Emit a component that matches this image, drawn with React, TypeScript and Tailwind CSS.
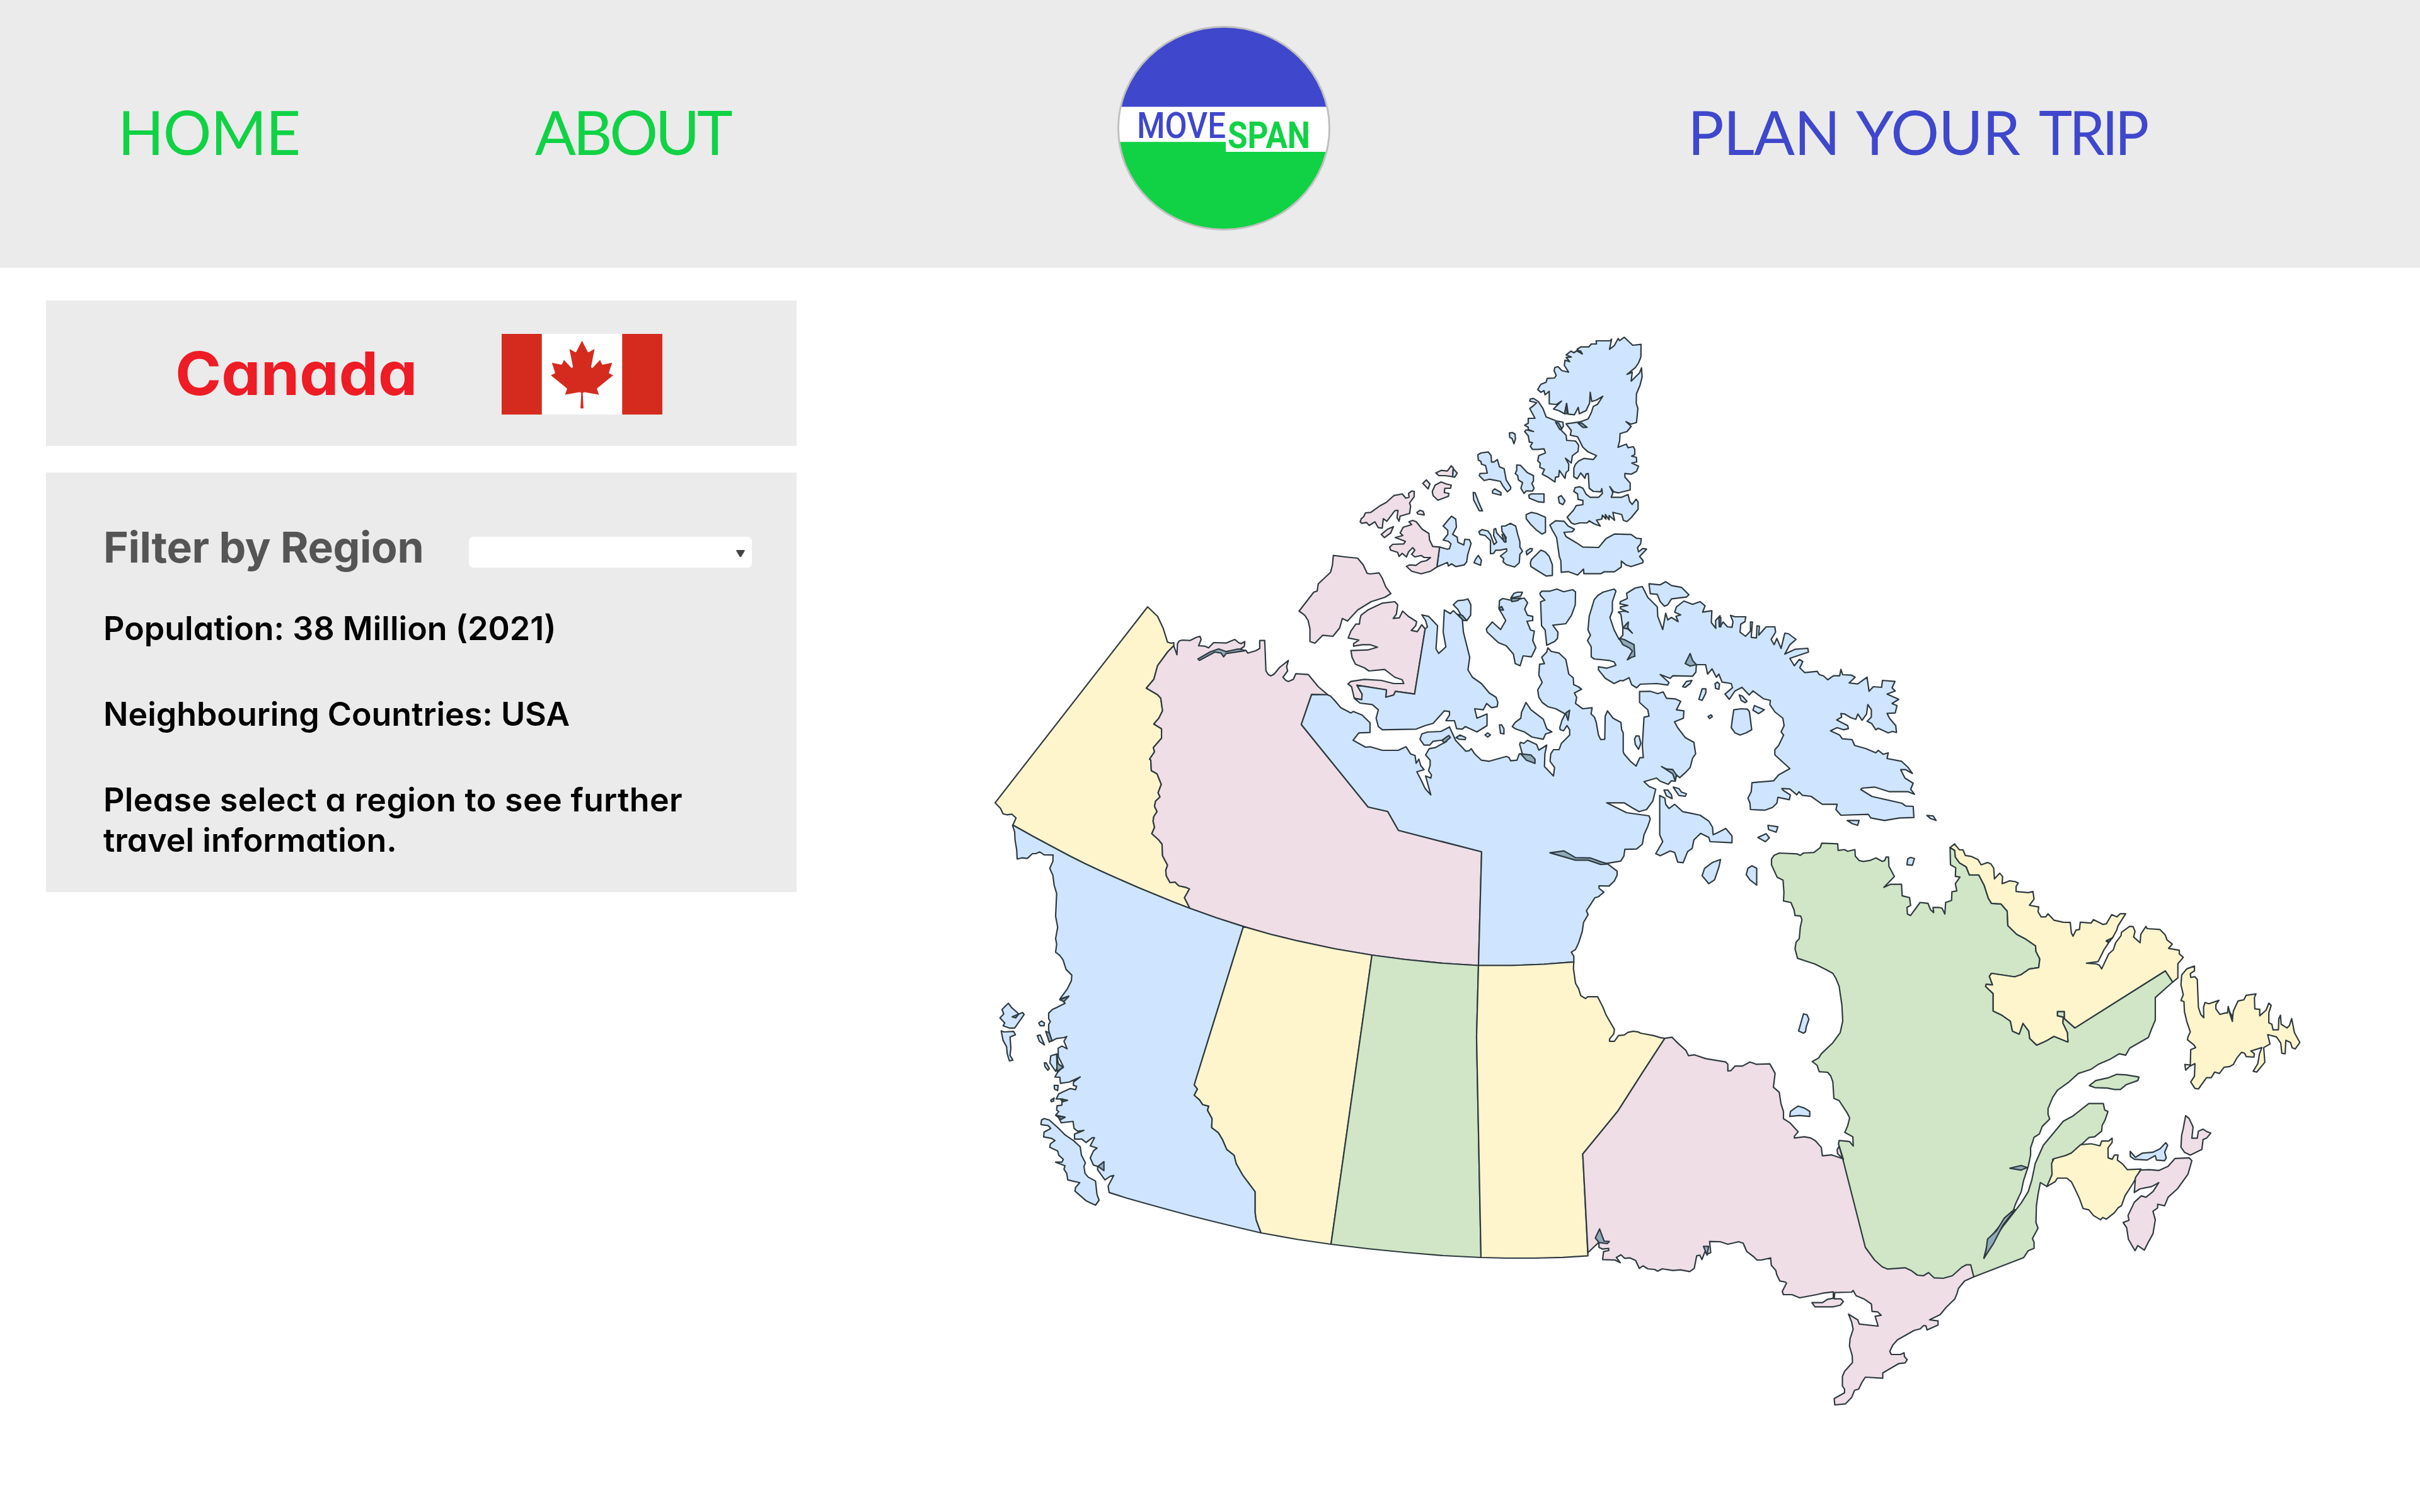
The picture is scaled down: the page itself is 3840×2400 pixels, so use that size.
import React from "react";

const BLUE = "#cfe5ff";
const PINK = "#efdee6";
const YELLOW = "#fff5cc";
const GREEN = "#d0e6c6";
const WATER = "#8fa9b8";

/* Map sheets: origin x, origin y, horizontal scale, vertical scale. */
const SHEETS: Record<string, [number, number, number, number]> = {
  A: [2140, 520, 3, 3],
  B: [2040, 860, 2.8, 3],
  C: [2500, 900, 2.529, 3],
  D: [1560, 940, 2.529, 3],
  E: [1560, 1280, 3, 2.24],
  F: [2440, 1300, 3, 2.8],
  G: [2480, 1740, 2.063, 3],
  H: [2780, 1320, 3, 2.1778],
  I: [3100, 1320, 2.7034, 2.24],
  Z: [0, 0, 1, 1],
};

/* Turns "A x y x y B x y" into a closed outline; a letter switches the sheet. */
function outline(points: string): string {
  let sheet = SHEETS.Z;
  const numbers: number[] = [];
  for (const token of points.trim().split(/[\s,]+/)) {
    if (SHEETS[token]) {
      sheet = SHEETS[token];
      continue;
    }
    const axis = numbers.length % 2;
    numbers.push(sheet[axis] + Number(token) / sheet[axis + 2]);
  }
  let d = "";
  for (let i = 0; i < numbers.length; i += 2) {
    d += `${i ? "L" : "M"}${numbers[i].toFixed(1)} ${numbers[i + 1].toFixed(1)}`;
  }
  return d + "Z";
}

/* Borders that two regions share. */
const YUKON_NWT =
  "Z 1888 1441.8 D 808 1455 828 1413 812 1405 785 1398 770 1380 750 1383 735 1350 733 1325 740 1300 720 1255 718 1200 705 1180 677 1150 688 1120 682 1090 685 1068 698 1045 688 1020 692 995 710 975 702 955 715 915 698 865 675 850 673 800 668 795 688 760 683 740 716 695 716 650 685 628 705 600 720 565 713 505 700 488 655 457 685 415 700 350 740 285 765 255";
const BC_ALBERTA =
  "Z 2001 1957 E 1300 1470 1295 1445 1295 1370 1235 1310 1205 1270 1195 1240 1160 1220 1140 1185 1120 1160 1088 1142 1090 1110 1068 1080 1074 1066 1045 1060 1030 1043 1005 1027 1020 1005 1005 990 Z 1973 1470.6";
const ONTARIO_QUEBEC =
  "F 1452 1510 G 918 310 990 720 1020 780 1045 812 1062 823 1120 817 1140 830 1160 852 1180 855 1197 840 1215 865 1245 867 1275 855 1305 815 1320 803 1335 803 1345 860";
const QUEBEC_LABRADOR =
  "H 943 55 965 65 968 88 988 108 1020 122 1035 150 1080 150 1105 185 1125 230 1140 248 1185 250 1215 275 1218 325 1260 355 1300 370 1350 395 1352 415 1370 440 1365 470 1320 475 1280 495 1250 502 1140 490 1130 500 1145 530 1115 528 1112 535 1148 560 1148 620 1190 635 1230 655 1240 690 1272 700 1290 663 1318 690 1322 715 1355 738 I 395 745 430 728 490 748 488 715 468 680 470 660 445 655 445 640 475 640 475 665 520 698 908 495 940 535";
/* The 60th parallel, cut at each corner where three regions meet. */
const NORTH_BC_WEST =
  "Z 1607 1309.5 1640 1328 1675 1346.8 1698 1359 1722 1370.9 1746 1382.2 1770 1393 1806 1408.7 1837 1421.6 1862 1431.8 1888 1441.8";
const NORTH_BC_WEST_BACK =
  "Z 1862 1431.8 1837 1421.6 1806 1408.7 1770 1393 1746 1382.2 1722 1370.9 1698 1359 1675 1346.8 1640 1328 1607 1309.5";

type Shape = [string, string];

const SHAPES: Shape[] = [
  // Yukon
  [YELLOW, "D 765 255 765 240 755 243 740 238 722 170 700 115 660 70 48 1003 70 1030 80 1055 95 1060 115 1057 132 1075 120 1108 " + NORTH_BC_WEST + " " + YUKON_NWT],
  // Northwest Territories, mainland
  [PINK, YUKON_NWT + " 778 298 780 245 787 232 800 228 830 230 855 215 870 210 875 225 865 255 890 257 905 265 925 240 975 242 1010 225 1025 240 1035 245 1050 235 1048 258 1030 273 975 283 1055 278 1062 290 1095 278 1110 268 1110 230 1130 230 1135 375 1145 393 1155 398 1168 390 1190 358 1225 325 1218 355 1222 375 1203 405 1215 420 1225 425 1245 415 1255 388 1305 392 1345 450 1385 490 1318 487 1277 630 1545 1023 Z 2202 1288 2219 1318 2351 1352 2346 1532.5 2290 1529 2230 1523 2177 1516 2118 1506 2060 1493.7 2016 1483 1973 1470.6 1930 1456.8"],
  // British Columbia
  [BLUE, BC_ALBERTA + " Z 1930 1456.8 1888 1441.8 " + NORTH_BC_WEST_BACK + " E 140 68 150 90 152 120 160 155 162 187 185 183 210 185 235 168 250 168 270 162 290 172 333 173 332 195 317 220 332 245 338 280 350 310 345 390 355 430 345 470 350 490 345 518 365 530 380 545 395 580 422 600 420 620 400 650 365 685 408 675 380 692 390 700 350 715 330 722 312 735 312 755 320 765 312 775 312 795 325 835 350 825 385 822 398 818 385 835 400 862 375 852 357 860 358 890 382 925 355 945 342 962 365 963 368 985 410 980 462 962 430 980 430 992 445 995 440 1007 415 1003 360 1022 348 1040 375 1040 400 1045 375 1050 375 1062 352 1065 350 1080 360 1085 345 1098 390 1105 360 1108 372 1125 428 1120 433 1145 450 1155 480 1152 435 1165 435 1183 470 1183 490 1195 520 1178 530 1178 510 1207 542 1215 525 1225 510 1250 525 1275 545 1280 545 1292 580 1328 605 1315 622 1312 595 1350 600 1373 Z 1787 1901.5 1817 1910 1855 1920.5 1893 1930.8 1930 1940 1965 1948.5"],
  // Alberta
  [YELLOW, BC_ALBERTA + " Z 2016 1483 2060 1493.7 2118 1506 2177 1516 2112 1975 2060 1967.5"],
  // Saskatchewan
  [GREEN, "Z 2177 1516 2230 1523 2290 1529 2346 1532.5 2343 1646 2350 1996 2290 1993 2230 1988 2170 1982 2112 1975"],
  // Nunavut, mainland
  [BLUE, "D 1318 487 B 185 728 200 735 215 752 245 790 290 815 300 808 340 825 375 862 375 908 325 910 300 945 355 978 375 976 430 993 500 993 535 976 555 1010 575 1018 580 1055 592 1035 600 1065 615 1085 583 1095 600 1130 620 1175 645 1205 622 1115 645 1125 648 1110 635 1090 642 1065 642 1040 622 1015 638 985 665 980 715 950 690 945 655 950 640 968 615 968 597 940 605 915 630 906 690 903 728 882 740 910 755 945 800 997 815 995 825 985 840 1010 870 1040 905 1045 945 1033 980 1022 992 1027 1000 1043 1028 1040 1038 1010 1052 1010 1040 965 1043 955 1058 960 1075 945 1115 965 1125 992 1160 968 1152 1010 1150 1070 1190 1115 1195 1075 1175 1045 1178 1010 1190 990 1215 990 1225 960 1262 920 1262 895 1250 875 1235 900 1220 895 1218 885 1228 850 1242 820 1200 795 1165 785 1140 765 1125 740 1120 705 1140 670 1125 635 1128 583 1150 580 1138 550 1160 525 1165 505 1180 522 1215 530 1245 560 1258 630 1278 648 1280 680 1300 690 1315 702 1283 720 1293 740 1288 770 1320 795 1362 790 1357 820 1372 835 1380 860 1390 920 1400 942 1418 940 1420 830 1430 805 1455 840 1490 860 1493 895 1500 910 1500 1000 C 195 890 220 925 243 948 258 908 272 908 268 850 275 715 295 710 290 680 257 645 257 593 300 592 330 603 352 595 365 625 400 628 422 640 405 680 435 685 433 720 397 737 410 765 440 812 475 835 482 890 470 910 460 955 440 980 418 1003 405 990 400 1020 385 1018 372 1035 340 1020 325 1005 275 1022 295 1045 322 1058 310 1115 285 1155 255 1165 230 1148 195 1123 125 1123 205 1170 295 1185 300 1200 290 1235 275 1275 268 1320 245 1343 F 415 135 410 165 395 187 330 197 378 232 378 250 365 275 340 298 292 297 292 308 315 325 290 345 272 350 255 375 232 408 240 425 218 460 212 500 195 550 180 580 160 592 172 610 172 635 Z 2450 1530.5 2400 1532.5 2346 1532.5 2351 1352 2219 1318 2202 1288 D 1545 1023 1277 630"],
  // Manitoba
  [YELLOW, "Z 2346 1532.5 2400 1532.5 2450 1530.5 F 172 635 170 665 180 730 195 755 205 785 228 798 238 790 285 790 310 835 325 870 365 935 362 955 342 978 342 988 365 988 385 962 412 960 430 948 455 943 480 947 490 952 550 962 585 972 605 975 500 1125 380 1300 G 65 275 82 760 Z 2480 1995.8 2435 1997 2390 1997 2350 1996 2343 1646"],
  // Quebec
  [GREEN, "H 435 1133 412 1080 415 1068 450 1070 465 1072 482 1087 480 1055 442 1040 455 1018 465 990 455 975 415 930 390 922 385 865 375 845 360 832 320 830 310 808 287 795 318 782 330 768 385 730 420 695 432 655 428 600 415 535 400 508 385 490 355 478 300 458 217 438 205 405 210 382 225 370 230 330 238 305 232 292 205 290 200 270 185 245 150 240 152 210 148 168 120 158 93 115 93 95 105 82 130 74 215 77 230 82 245 74 295 72 325 55 332 40 408 42 410 65 440 62 455 68 490 62 492 85 510 100 530 103 560 100 590 91 620 103 632 100 638 88 650 88 652 120 678 155 628 193 660 182 712 182 715 222 750 228 755 255 738 262 740 285 755 290 800 245 838 248 850 270 865 280 862 262 890 262 905 265 918 285 922 245 950 238 952 208 975 205 968 180 990 157 968 155 970 125 945 115 " + QUEBEC_LABRADOR + " 865 590 865 670 850 700 835 732 755 770 738 795 710 790 670 810 620 828 590 845 535 860 495 890 445 920 425 945 405 985 405 1005 412 1022 380 1048 368 1075 345 1087 330 1125 330 1150 320 1190 300 1240 290 1280 265 1325 255 1350 215 1385 150 1450 130 1515 165 1460 215 1400 262 1350 290 1320 320 1280 335 1240 350 1180 385 1115 430 1070 470 1030 510 1012 580 967 642 967 648 990 662 995 650 1025 637 1045 635 1065 605 1085 580 1088 545 1115 505 1143 480 1152 425 1165 422 1220 400 1262 372 1248 362 1290 355 1330 353 1390 362 1410 338 1447 345 1460 345 1482 320 1490 300 1515 G 1345 860 1320 862 1250 920 1060 880 960 760 905 320"],
  // Newfoundland and Labrador
  [YELLOW, QUEBEC_LABRADOR + " 962 520 962 470 985 447 968 435 968 422 922 415 938 400 915 385 908 368 885 348 830 345 825 337 803 365 800 395 772 375 778 355 770 338 755 337 720 358 718 370 695 395 685 420 665 435 635 488 625 475 610 470 570 468 620 462 645 420 665 395 655 390 680 380 700 350 705 335 738 292 715 292 700 303 678 295 655 328 640 330 600 313 590 325 543 322 540 348 525 350 512 372 505 360 500 323 470 322 430 315 405 292 395 303 375 303 362 285 365 268 325 262 345 240 340 213 320 217 268 213 268 195 277 183 265 178 240 175 225 180 208 185 210 160 198 148 175 168 172 130 160 115 145 110 118 118 105 100 75 88 50 85 40 65 25 65 5 45 H 965 42"],
  [YELLOW, "I 975 545 978 510 1000 488 1033 478 1033 495 1015 505 1017 518 1035 516 1045 525 1050 625 1060 650 1073 662 1072 625 1078 608 1095 612 1138 600 1125 615 1125 630 1142 650 1165 645 1175 645 1178 622 1195 672 1200 638 1220 602 1245 598 1255 582 1297 577 1290 590 1292 630 1313 632 1313 655 1340 635 1352 610 1362 618 1352 645 1352 680 1365 685 1370 705 1393 705 1395 665 1402 653 1405 685 1430 698 1440 690 1450 665 1462 715 1485 750 1465 773 1452 768 1445 750 1425 742 1422 790 1408 788 1403 752 1385 730 1347 722 1357 755 1330 768 1335 820 1300 855 1285 852 1305 825 1312 790 1322 768 1275 780 1290 790 1288 802 1255 800 1248 788 1235 785 1215 805 1200 828 1185 835 1160 838 1140 860 1120 855 1105 875 1085 875 1050 915 1035 913 1017 890 1033 870 1035 825 1012 835 995 848 992 828 1015 830 1017 775 1038 768 1030 758 1003 740 1005 730 1015 712 1000 675 990 640 988 605 975 600 985 580"],
  // Ontario
  [PINK, "G 65 275 F 380 1300 500 1125 605 975 640 970 660 990 705 1028 718 1052 745 1048 800 1065 895 1080 905 1090 905 1120 920 1118 940 1098 975 1098 1010 1080 1040 1090 1105 1088 1130 1130 1122 1192 1150 1215 1158 1265 1170 1300 1170 1332 1200 1350 1240 1390 1222 1410 1222 1418 1270 1412 1300 1418 1322 1430 1350 1460 1355 1497 1400 1493 " + ONTARIO_QUEBEC + " 1315 880 1295 915 1290 940 1283 965 1255 1005 1235 1040 1200 1065 1228 1070 1228 1090 1192 1113 1188 1093 1180 1093 1170 1108 1150 1115 1095 1160 1080 1185 1070 1215 1075 1230 1105 1230 1117 1222 1118 1240 1127 1255 1120 1270 1100 1273 1047 1318 1047 1343 990 1338 980 1360 968 1395 955 1400 945 1435 925 1465 890 1470 888 1440 922 1412 922 1395 915 1380 915 1335 922 1310 948 1268 947 1235 938 1190 940 1155 950 1110 945 1075 935 1038 965 1065 970 1085 1032 1095 1022 1048 1042 1043 1030 1027 1012 1025 1010 990 985 965 960 950 950 925 945 933 890 935 888 965 910 965 918 978 908 995 885 1003 825 1003 815 983 850 983 865 968 885 962 885 932 850 938 830 945 775 960 750 945 722 945 718 930 732 890 728 885 710 880 700 850 697 830 682 805 680 770 650 780 635 780 625 765 602 740 590 700 575 693 540 705 515 693 480 692 484 745 472 752 465 740 455 778 448 757 438 760 430 820 415 835 385 827 360 830 325 822 310 833 300 825 278 822 262 808 250 820 238 782 220 770 202 772 190 755 175 768 188 793 170 780 130 778 133 740 150 735 150 725 130 728 118 720 118 695 82 745"],
  // James Bay corner
  [PINK, "F 1435 1455 1425 1470 1428 1488 1452 1510"],
  // Anticosti
  [GREEN, "I 582 903 610 885 665 875 700 863 740 865 795 873 790 885 740 900 715 917 690 917 660 912 605 910"],
  // New Brunswick
  [YELLOW, "I 400 1262 422 1220 420 1180 430 1163 480 1152 505 1143 545 1113 590 1110 628 1117 635 1100 665 1100 680 1090 680 1105 662 1125 663 1160 680 1165 690 1150 705 1150 702 1168 725 1182 745 1202 803 1200 770 1250 735 1295 720 1330 705 1338 690 1355 655 1378 640 1372 630 1380 600 1365 580 1345 555 1340 540 1305 520 1270 505 1245 485 1232 445 1232 435 1245"],
  // Nova Scotia
  [PINK, "I 803 1203 840 1202 880 1205 920 1190 950 1162 1010 1160 1022 1170 1005 1218 960 1270 920 1300 905 1330 875 1325 875 1338 855 1350 865 1380 855 1430 835 1460 818 1488 790 1472 778 1490 750 1450 742 1408 727 1390 752 1382 748 1365 775 1318 805 1295 825 1300 855 1280 880 1248 850 1262 800 1270 775 1283 780 1230"],
  [PINK, "I 978 1080 985 1055 995 1010 1010 1020 1027 1050 1022 1090 1045 1090 1050 1065 1070 1058 1085 1066 1103 1072 1085 1090 1070 1095 1065 1130 1015 1150 990 1140 975 1122"],
  // Prince Edward Island
  [BLUE, "I 757 1137 780 1158 810 1143 855 1140 885 1128 910 1106 918 1115 905 1140 912 1160 905 1170 870 1168 865 1152 830 1168 775 1165 758 1155"],
  // Baffin Island
  [BLUE, "C 75 155 90 135 110 120 155 105 162 115 148 165 148 210 138 240 155 300 175 345 190 325 190 290 182 225 172 215 195 210 212 215 180 198 180 190 210 183 178 175 180 165 208 150 205 125 240 100 268 93 290 145 328 190 330 235 350 298 362 220 370 252 385 240 412 260 403 235 422 228 398 215 405 190 435 162 470 178 500 165 520 185 510 215 547 208 545 265 563 292 562 255 580 232 580 285 592 262 610 285 628 287 632 260 622 230 640 237 683 237 680 260 663 272 660 310 682 330 702 305 702 262 710 262 705 335 726 338 728 280 738 282 735 325 765 285 800 285 803 310 785 345 797 370 808 340 825 388 840 315 855 318 885 345 860 370 840 415 880 392 932 387 935 405 860 435 878 470 898 440 912 450 900 480 920 503 970 497 978 512 995 518 1012 537 1035 518 1060 518 1065 488 1072 513 1108 515 1122 525 1098 552 1132 557 1170 525 1178 592 1195 570 1228 573 1232 540 1282 545 1270 575 1283 590 1250 605 1297 630 1270 650 1290 660 1283 695 1250 697 1260 720 1285 755 1288 788 1272 783 1255 790 1215 768 1205 775 1188 745 1170 735 1187 715 1187 680 1173 655 1168 700 1150 730 1133 700 1125 725 1105 718 1080 700 1065 698 1068 715 1048 728 1092 755 1095 770 1075 775 1050 765 1023 780 1060 800 1070 818 1110 822 1120 850 1165 865 1205 885 1215 873 1235 892 1255 885 1250 912 1308 925 1335 955 1352 983 1325 965 1305 965 1322 1005 1355 1030 1345 1058 1360 1082 1335 1070 1260 1070 1200 1048 1150 1053 1145 1060 1190 1093 1310 1125 1325 1138 1355 1140 1358 1193 1300 1195 1240 1207 1185 1195 1175 1178 1065 1182 1045 1155 1050 1130 990 1130 945 1092 910 1087 897 1070 888 1085 860 1057 828 1055 835 1065 862 1085 858 1108 812 1097 808 1125 790 1145 760 1158 702 1155 700 1125 692 1100 705 1070 708 1027 795 1018 815 990 860 960 800 895 800 870 815 850 835 800 825 785 837 755 832 720 800 690 780 655 782 635 755 628 712 590 697 610 668 573 640 590 617 630 600 605 630 575 625 555 588 548 575 510 565 525 548 485 530 510 522 465 485 465 483 500 470 520 390 518 380 530 340 512 375 550 370 562 325 555 260 558 245 575 225 560 215 527 190 542 180 540 155 555 120 530 92 490 92 475 125 482 162 468 155 452 135 445 75 438 63 428 63 380 48 350 60 325 50 300 55 235"],
  // Bylot
  [BLUE, "C 295 80 340 85 362 70 385 88 425 97 455 132 445 143 385 152 370 180 357 187 340 165 328 130 300 127"],
  // Southampton, Coats and Mansel
  [BLUE, "C 338 1088 358 1100 362 1130 375 1150 398 1130 430 1165 460 1172 500 1182 535 1210 550 1240 552 1275 570 1265 603 1245 628 1280 628 1313 540 1308 535 1288 502 1268 475 1300 468 1340 450 1355 432 1408 410 1405 398 1360 380 1352 340 1375 322 1365 350 1308 338 1275"],
  [BLUE, "C 518 1435 548 1408 582 1393 575 1430 558 1490 535 1508 508 1470"],
  [BLUE, "C 692 1435 708 1423 727 1435 727 1515 700 1490 685 1465"],
  // Foxe Basin and Hudson Strait islands
  [BLUE, "C 635 680 665 675 690 677 698 690 707 775 685 790 660 800 640 790 625 765 630 720"],
  [BLUE, "C 430 570 445 545 467 540 460 555 440 573"],
  [BLUE, "C 495 630 508 580 523 580 523 600 508 635"],
  [BLUE, "C 560 555 570 548 578 558 575 582 562 578"],
  [BLUE, "C 657 610 670 615 688 640 680 646 665 635"],
  [BLUE, "C 718 660 758 680 735 698 712 682"],
  [BLUE, "C 532 712 544 704 549 712 538 722"],
  [BLUE, "C 237 820 243 804 255 805 262 840 253 868 240 845"],
  [BLUE, "C 355 1062 370 1062 385 1085 388 1103 365 1090"],
  [BLUE, "C 392 1048 415 1055 425 1072 445 1080 440 1092 415 1088"],
  [BLUE, "C 772 1230 812 1237 805 1263 775 1250"],
  [BLUE, "C 732 1288 765 1270 778 1290 762 1308"],
  [BLUE, "C 1090 1207 1138 1207 1132 1230 1110 1222"],
  [BLUE, "C 1410 1183 1435 1185 1447 1207 1425 1198"],
  [BLUE, "C 1333 1390 1345 1383 1360 1388 1352 1420 1330 1418"],
  [BLUE, "F 1265 866 1282 870 1291 890 1278 925 1275 945 1265 952 1242 942"],
  [BLUE, "F 1200 1322 1203 1300 1225 1285 1240 1276 1270 1285 1295 1300 1295 1322 1245 1318"],
  // Ellesmere
  [BLUE, "A 1283 52 1290 62 1312 46 1352 84 1392 80 1391 140 1380 168 1365 190 1325 223 1350 212 1345 255 1385 215 1394 192 1397 235 1387 275 1370 315 1369 360 1377 385 1370 452 1343 460 1320 448 1345 470 1325 495 1292 505 1290 540 1282 570 1322 555 1330 572 1355 567 1362 580 1362 605 1347 612 1370 618 1371 640 1348 645 1380 660 1370 685 1345 698 1315 695 1315 712 1340 740 1340 773 1285 787 1262 782 1243 757 1258 785 1250 808 1300 808 1330 795 1338 828 1350 842 1368 817 1378 830 1378 865 1345 905 1325 923 1308 918 1300 890 1258 880 1266 918 1240 895 1240 915 1222 890 1225 912 1208 893 1205 912 1180 917 1198 945 1170 935 1145 920 1135 930 1100 930 1075 937 1060 930 1040 903 1070 870 1083 848 1115 843 1115 823 1092 818 1090 792 1072 780 1078 762 1100 758 1115 765 1130 793 1150 808 1190 808 1208 790 1205 767 1200 782 1165 780 1145 765 1141 695 1130 697 1125 718 1105 692 1088 720 1072 710 1072 670 1080 650 1095 635 1120 623 1165 628 1180 610 1140 592 1115 570 1090 520 1055 512 1060 490 1035 458 1060 455 1105 448 1140 435 1155 405 1165 375 1185 365 1210 327 1180 345 1157 352 1150 308 1147 360 1130 395 1098 410 1093 380 1075 415 1045 412 1038 362 1028 410 1000 395 975 388 1013 350 990 366 955 363 955 303 945 312 935 320 930 300 915 308 900 295 915 270 940 260 945 242 980 240 988 228 978 205 982 190 997 186 1015 205 1047 212 1027 180 1030 155 1052 162 1035 142 1060 140 1035 130 1058 112 1072 120 1090 108 1112 125 1088 103 1105 92 1143 92 1155 78 1180 78 1178 63 1245 63 1252 55 1242 103 1265 85"],
  // Axel Heiberg
  [BLUE, "A 862 350 865 340 880 337 903 352 925 385 940 425 990 445 1020 450 1022 470 1010 487 1035 512 1038 537 1080 540 1095 560 1092 590 1065 610 1060 645 1032 622 1048 650 1047 680 1035 690 1030 718 1003 680 1000 710 985 712 982 735 945 710 922 698 932 675 910 665 912 645 900 635 905 610 937 597 930 577 900 580 875 580 865 565 875 548 860 545 855 515 838 495 845 487 880 495 855 485 855 475 838 465 855 455 855 432 887 432 862 385 880 372 895 358"],
  [BLUE, "A 765 502 780 500 792 507 794 530 787 553 778 528 767 523"],
  [BLUE, "A 615 605 630 597 665 592 678 610 680 640 692 640 708 628 718 663 740 672 750 725 772 760 770 770 755 782 735 755 722 732 670 722 645 728 622 705 625 695 660 693 652 657 632 650 630 638 617 630"],
  [BLUE, "A 800 654 818 656 850 690 880 705 880 730 872 742 883 765 875 778 845 778 835 790 820 765 828 738 808 725 805 705 793 695 800 680"],
  [BLUE, "A 685 778 695 768 725 785 725 798 685 788"],
  [BLUE, "A 593 785 602 787 620 835 637 873 622 872 605 840 595 820"],
  [BLUE, "A 857 798 870 792 930 792 930 832 905 830 860 812"],
  [BLUE, "A 998 808 1012 800 1030 825 1020 843 1003 835"],
  [BLUE, "A 845 890 870 880 895 885 937 903 937 975 920 983 895 965 865 935 845 910"],
  [BLUE, "A 865 1120 870 1105 915 1060 935 1068 955 1090 970 1130 970 1180 940 1183 895 1155 868 1138"],
  [BLUE, "A 845 1065 865 1052 875 1053 872 1063 848 1082"],
  [BLUE, "A 597 1120 603 1105 617 1085 632 1108 628 1132"],
  // Bathurst
  [BLUE, "A 620 972 635 962 662 968 675 985 692 1033 705 1022 690 990 692 960 700 957 705 978 725 1000 745 1022 750 1000 730 970 728 945 745 945 770 932 795 945 805 985 815 1020 815 1045 828 1065 815 1080 812 1120 790 1140 750 1128 735 1115 738 1100 722 1088 752 1065 752 1053 720 1060 700 1060 690 1075 675 1077 675 1015 650 990 625 985"],
  // Melville
  [BLUE, "A 433 1045 470 1055 480 1053 487 1030 475 1018 450 1012 472 985 472 965 450 945 475 915 490 898 510 912 513 950 495 985 517 998 520 1022 548 1035 553 1008 575 1010 583 1028 567 1080 562 1115 550 1130 510 1138 490 1125 475 1135 470 1118 420 1140"],
  [PINK, "A 287 925 305 918 322 925 350 960 382 980 385 1010 400 1042 433 1045 420 1140 390 1160 345 1172 300 1160 275 1137 290 1130 320 1132 345 1115 370 1110 390 1095 360 1095 345 1085 315 1092 300 1080 315 1060 305 1048 285 1068 275 1092 255 1075 240 1090 233 1070 200 1060 195 1045 210 1032 262 1030 270 1018 222 1000 258 990 245 978 260 950 300 938"],
  [PINK, "A 415 692 440 680 470 683 488 658 498 668 495 710 460 705 430 705"],
  [BLUE, "A 498 672 517 693 505 712 495 710"],
  [PINK, "A 353 742 370 725 387 745 378 768"],
  [PINK, "A 398 780 412 750 440 735 465 745 488 750 485 765 458 765 455 785 477 790 475 803 425 822 402 800"],
  // Prince Patrick
  [PINK, "A 55 925 60 910 72 900 80 882 105 880 150 848 180 832 215 800 255 792 272 812 288 808 285 790 300 778 312 780 312 805 290 835 295 850 290 885 245 898 240 922 230 905 235 870 220 872 182 922 165 910 160 955 140 952 125 925 98 942 85 928 62 932"],
  [PINK, "A 325 880 340 870 355 875 360 892 330 888"],
  [PINK, "A 155 985 185 960 213 948 200 978 170 1000"],
  // Devon
  [BLUE, "A 958 940 985 920 1025 922 1045 945 1075 960 1065 972 1025 975 1035 995 1085 1025 1115 1045 1190 1047 1225 1005 1265 983 1345 985 1370 1003 1393 1005 1390 1030 1375 1048 1380 1068 1400 1052 1418 1055 1385 1090 1402 1110 1400 1120 1345 1138 1320 1130 1298 1112 1298 1140 1265 1163 1215 1163 1200 1172 1120 1172 1118 1150 1108 1160 1090 1178 1045 1162 1012 1165 1010 1110 1003 1090 990 1000 970 965"],
  // Banks
  [PINK, "B 212 65 265 72 320 78 345 110 362 150 375 153 415 148 430 175 445 215 468 247 440 265 380 285 320 325 275 377 252 365 240 410 210 450 165 445 130 483 108 475 108 415 100 375 85 350 60 330 125 240 140 235 145 200 200 145 208 110"],
  // Victoria
  [PINK, "B 330 370 335 350 365 325 430 292 485 285 498 300 492 345 478 365 505 362 520 330 545 355 582 380 578 400 558 422 585 428 605 395 620 415 573 725 488 712 480 730 445 740 448 705 317 683 340 725 338 752 305 745 293 690 277 677 290 665 350 655 425 660 480 675 525 675 518 657 485 645 440 608 370 615 350 600 310 583 295 550 290 518 365 515 408 502 375 490 340 490 302 497 302 485 325 468 278 458 290 425 312 392 328 392"],
  [BLUE, "B 620 415 630 405 622 375 605 348 635 355 675 400 668 510 680 532 712 500 700 430 705 325 732 342 745 328 785 370 790 430 818 550 810 610 830 645 870 675 905 720 935 740 943 765 940 785 915 790 893 770 878 800 840 795 850 840 895 820 895 875 850 905 798 880 785 892 760 890 750 852 712 852 728 825 728 808 705 805 655 865 620 875 580 892 430 895 412 880 402 840 412 800 385 775 330 768 305 745 338 752 340 725 317 683 448 705 445 740 480 730 488 712 573 725"],
  [BLUE, "B 745 300 765 280 790 278 810 272 823 300 822 350 805 375 780 350 765 322"],
  // Prince of Wales
  [BLUE, "B 892 415 918 382 955 418 978 375 962 345 948 320 950 280 965 270 1010 280 1060 268 1075 290 1062 320 1075 350 1098 355 1098 375 1072 378 1088 420 1105 425 1098 470 1112 505 1092 548 1055 543 1042 590 1020 580 1012 535 980 495 945 480 895 430"],
  [BLUE, "B 1000 268 1015 245 1030 240 1052 240 1045 258"],
  // Somerset
  [BLUE, "B 1130 245 1138 235 1175 235 1205 225 1235 238 1275 228 1288 238 1287 300 1270 350 1245 390 1187 397 1210 430 1208 460 1195 475 1160 493 1153 420 1137 400 1133 285 1152 278 1132 255"],
  // King William
  [BLUE, "B 1007 880 1020 860 1045 840 1048 812 1068 765 1090 800 1145 845 1160 890 1183 905 1155 915 1145 940 1095 930 1060 905 1020 890"],
  [BLUE, "B 950 872 960 872 970 890 970 915 955 912"],
  [BLUE, "B 886 920 898 910 910 920 898 930"],
  [BLUE, "B 757 932 775 920 800 932 798 942 770 940"],
  // Vancouver Island
  [BLUE, "E 275 1130 278 1115 290 1110 315 1115 360 1145 390 1168 430 1188 462 1210 468 1240 487 1268 480 1280 485 1305 500 1318 535 1332 542 1380 552 1400 535 1418 490 1402 437 1368 440 1355 460 1338 403 1328 398 1305 385 1290 390 1278 345 1265 375 1265 382 1255 360 1240 355 1225 317 1212 320 1200 342 1188 325 1180 288 1175 290 1158 322 1145 310 1135 280 1132"],
  // Haida Gwaii and coastal islands
  [BLUE, "E 120 700 135 715 170 738 188 733 195 740 150 788 125 788 95 780 103 770 80 752 98 738 90 722"],
  [BLUE, "E 86 798 100 802 145 800 154 812 128 820 132 860 128 885 142 902 125 905 115 880 112 855 95 832"],
  [BLUE, "E 265 770 278 763 292 770 290 780 272 780"],
  [BLUE, "E 258 815 272 813 292 848 268 835"],
  [BLUE, "E 322 887 352 880 355 925 345 942 318 912"],
  [BLUE, "E 292 912 300 912 315 932 308 938 294 925"],
  [BLUE, "E 338 992 357 992 355 1010 340 1005"],
  [BLUE, "E 322 1045 338 1037 335 1048 325 1050"],
];

const LAKES: string[] = [
  "C 175 340 195 345 235 370 238 425 225 430 208 442 228 400 215 385 190 370",
  "C 460 412 470 445 485 465 460 472 440 460",
  "C 345 950 365 962 390 964 405 990 400 1018 390 985",
  "C 190 290 212 262 210 290 228 315 210 295",
  "C 575 240 583 240 583 285 577 285",
  "B 695 945 725 922 732 932 705 957",
  "B 1045 1010 1090 1015 1108 1035 1108 1055 1070 1040",
  "B 1003 270 1045 268 1030 280 1005 285",
  "B 1245 815 1262 802 1255 850 1248 830",
  "B 765 345 785 350 805 375 790 375",
  "B 948 315 960 308 968 325 955 325",
  "A 985 450 1000 455 1015 482 1005 485",
  "A 1092 455 1110 455 1135 475 1115 475",
  "A 1085 110 1105 112 1112 125",
  "A 1028 410 1037 362 1040 410",
  "A 730 985 740 985 750 1020 740 1020",
  "F 58 150 125 142 150 155 180 172 250 173 300 190 335 200 300 202 240 183 180 183",
  "D 862 318 910 285 945 270 975 283 1025 270 1055 278 975 292 965 308 955 290 930 285 868 325",
  "G 120 632 135 690 152 692 145 702 118 697 106 675",
  "G 460 715 477 715 472 757",
  "G 1463 343 1500 330 1520 340 1500 352",
  "G 1473 545 1445 580 1420 640 1390 680 1385 735 1378 772 1410 700 1440 615 1480 540",
  "E 298 800 315 805 328 832 315 838",
  "E 350 885 358 915 382 928 352 942",
  "E 547 1280 575 1263 575 1295",
  "E 348 1100 390 1105 372 1113",
  "E 365 688 408 675 385 694",
  "E 370 1043 402 1045 380 1050",
  "E 138 748 170 738 155 752",
  "I 1182 640 1195 655 1196 675",
  "I 655 388 680 378 668 392",
];

function CanadaMap() {
  return (
    <svg
      viewBox="1540 477 2160 1800"
      className="ml-[276px] h-[1800px] w-[2160px] shrink-0"
      stroke="#2f3a40"
      strokeWidth={2.2}
      strokeLinejoin="round"
      role="img"
    >
      {SHAPES.map(([fill, points], i) => (
        <path key={i} d={outline(points)} fill={fill} />
      ))}
      {LAKES.map((points, i) => (
        <path key={i} d={outline(points)} fill={WATER} />
      ))}
    </svg>
  );
}

function Logo() {
  return (
    <svg viewBox="1770 38 344 332" className="h-[332px] w-[344px]">
      <defs>
        <clipPath id="disc">
          <ellipse cx="1942" cy="203.5" rx="167" ry="161" />
        </clipPath>
      </defs>
      <g clipPath="url(#disc)">
        <rect x="1770" y="38" width="344" height="332" fill="#fff" />
        <rect x="1770" y="38" width="344" height="131.5" fill="#3f47cc" />
        <path d="M1770 225.3H1945V241H2114V370H1770Z" fill="#10d244" />
      </g>
      <ellipse cx="1942" cy="203.5" rx="167.5" ry="161" fill="none" stroke="#c0c0c0" strokeWidth="3" />
      <text x="1804" y="219" fontFamily="Roboto" fontWeight="500" fontSize="57.5" textLength="141" lengthAdjust="spacingAndGlyphs" fill="#3f47cc">
        MOVE
      </text>
      <text x="1948" y="234.5" fontFamily="Roboto" fontWeight="700" fontSize="58.5" textLength="131" lengthAdjust="spacingAndGlyphs" fill="#10d244">
        SPAN
      </text>
    </svg>
  );
}

function Flag() {
  return (
    <svg viewBox="0 0 9600 4800" preserveAspectRatio="none" className="h-[128px] w-[255px]">
      <path fill="#fff" d="M0 0h9600v4800H0z" />
      <path fill="#d52b1e" d="M0 0h2400v4800H0zM7200 0h2400v4800H7200z" />
      <path
        fill="#d52b1e"
        transform="translate(4800 2400)"
        d="m-90 2030 45-863a95 95 0 0 0-111-98l-859 151 116-320a65 65 0 0 0-20-73l-941-762 212-99a65 65 0 0 0 34-79l-186-572 542 115a65 65 0 0 0 73-38l105-247 423 454a65 65 0 0 0 111-57l-204-1052 327 189a65 65 0 0 0 91-27l332-652 332 652a65 65 0 0 0 91 27l327-189-204 1052a65 65 0 0 0 111 57l423-454 105 247a65 65 0 0 0 73 38l542-115-186 572a65 65 0 0 0 34 79l212 99-941 762a65 65 0 0 0-20 73l116 320-859-151a95 95 0 0 0-111 98l45 863z"
      />
    </svg>
  );
}

export default function App() {
  return (
    <div className="h-[2400px] w-[3840px] overflow-hidden bg-white font-['Inter',sans-serif] text-black [font-feature-settings:'cv11']">
      <header className="flex h-[425px] items-start bg-[#ebebeb] font-['Century_Gothic','Lato',sans-serif] text-[96px] leading-[120px] whitespace-nowrap">
        <a className="mt-[149px] ml-[187px] w-[662px] tracking-[-1.5px] text-[#10d244]">HOME</a>
        <a className="mt-[149px] w-[921px] tracking-[-4.4px] text-[#10d244]">ABOUT</a>
        <div className="mt-[38px] w-[908px]">
          <Logo />
        </div>
        <a className="mt-[149px] flex text-[#3f47cc]">
          <span className="w-[267px] tracking-[-1px]">PLAN</span>
          <span className="w-[290px] tracking-[-1px]">YOUR</span>
          <span className="origin-left scale-x-[0.94] tracking-[-5px]">TRIP</span>
        </a>
      </header>

      <main className="flex items-start pt-[52px] pl-[73px]">
        <aside className="flex w-[1191px] shrink-0 flex-col gap-[42px]">
          <section className="flex h-[231px] items-start bg-[#ebebeb]">
            <h1 className="mt-[56px] ml-[205px] w-[518px] origin-left scale-x-[1.042] text-[95px] leading-[120px] font-bold text-[#ee1c24]">
              Canada
            </h1>
            <div className="mt-[53px]">
              <Flag />
            </div>
          </section>

          <section className="h-[666px] bg-[#ebebeb] pl-[91px] whitespace-nowrap">
            <div className="flex items-start pt-[78px]">
              <h2 className="w-[580px] text-[68px] leading-[80px] font-bold tracking-[-0.4px] text-[#555]">Filter by Region</h2>
              <div className="mt-[24px] flex h-[49px] w-[449px] items-center justify-end rounded-[7px] bg-white pr-[11px]">
                <svg viewBox="0 0 14 12" className="mt-[4px] h-[12px] w-[14px]">
                  <path d="M1 0H13L14 1L8 11H6L0 1Z" fill="#444" />
                </svg>
              </div>
            </div>
            <p className="mt-[58px] text-[52px] leading-[64px] font-semibold">Population: 38 Million (2021)</p>
            <p className="mt-[72px] text-[52px] leading-[64px] font-semibold tracking-[-0.05px]">Neighbouring Countries: USA</p>
            <p className="mt-[72px] text-[52px] leading-[64px] font-semibold">
              <span className="tracking-[0.3px]">Please select a region to see further</span>
              <br />
              travel information.
            </p>
          </section>
        </aside>
        <CanadaMap />
      </main>
    </div>
  );
}
